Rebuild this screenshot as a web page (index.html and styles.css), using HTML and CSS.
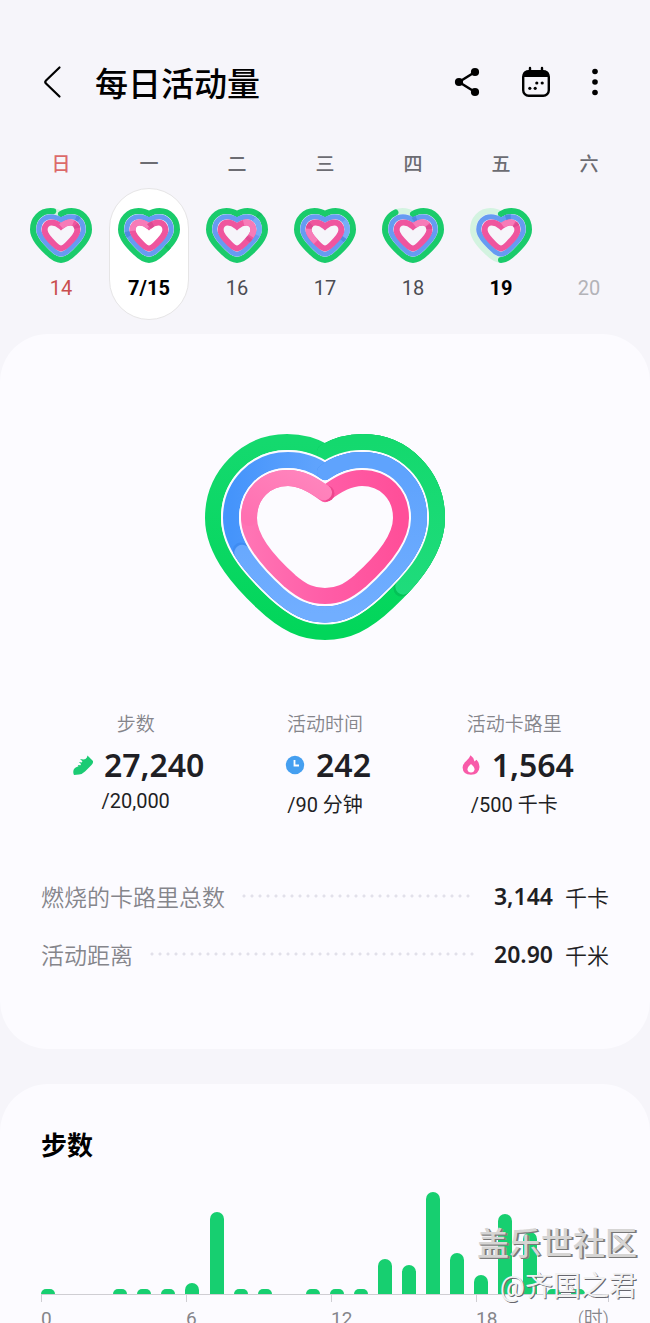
FILE: index.html
```html
<!DOCTYPE html>
<html lang="zh-CN">
    <head>
        <title>每日活动量</title>
        <meta charset="utf-8" />
        <meta name="viewport" content="width=device-width, initial-scale=1" />
        <link rel="stylesheet" href="styles.css">
    </head>

    <body>
        <!-- Shared ring shapes for the week strip and the big heart -->
        <svg class="defs" width="0" height="0" aria-hidden="true">
            <defs>
                <path id="ringSteps" pathLength="100" d="M31 6C34 4 37.5 3 41.5 3C51.5 3 59 11 59 21.5C59 30 51 38 45 44C40 49 36 52 31 52C26 52 22 49 17 44C11 38 3 30 3 21.5C3 11 10.5 3 20.5 3C24.5 3 28 4 31 6Z" />
                <path id="ringTime" pathLength="100" d="M31 12C34 10 37 8.7 41 8.7C48 8.7 53.3 14 53.3 21.5C53.3 28 46 35 41 40C37 44.3 34 46.2 31 46.2C28 46.2 25 44.3 21 40C16 35 8.7 28 8.7 21.5C8.7 14 14 8.7 21 8.7C25 8.7 28 10 31 12Z" />
                <path id="ringCal" pathLength="100" d="M31 18.6C34 16 37 14.5 40.3 14.5C44.5 14.5 47.4 17.5 47.4 22C47.4 27 42 32 37.5 36.5C34.5 39.5 33 40.4 31 40.4C29 40.4 27.5 39.5 24.5 36.5C20 32 14.6 27 14.6 22C14.6 17.5 17.5 14.5 21.7 14.5C25 14.5 28 16 31 18.6Z" />
                <path id="bigSteps" pathLength="100" d="M120 18C131 11.5 144 8 158 8C199 8 232 42 232 84C232 120 200 152 183 168C160 190 142 198 120 198C98 198 80 190 57 168C40 152 8 120 8 84C8 42 41 8 82 8C96 8 109 11.5 120 18Z" />
                <path id="bigTime" pathLength="100" d="M120 38C131 30 144 26 157 26C189 26 214 51 214 84C214 113 189 138 169 157C150 174 137 180.5 120 180.5C103 180.5 90 174 71 157C51 138 26 113 26 84C26 51 51 26 83 26C96 26 109 30 120 38Z" />
                <path id="bigCal" pathLength="100" d="M120 60C133 50 144 44 157 44C179 44 196 60 196 84C196 106 174 130 155 147C142 158 133 162 120 162C107 162 98 158 85 147C66 130 44 106 44 84C44 60 61 44 83 44C96 44 107 50 120 60Z" />
            </defs>
        </svg>

        <header class="topBar">
            <button class="iconBtn backBtn" aria-label="返回">
                <svg width="20" height="34" viewBox="0 0 20 34"><path d="M17.5 2.5L4 15.5Q2.5 17 4 18.5L17.5 31.5" fill="none" stroke="#000" stroke-width="2.2" stroke-linecap="round" /></svg>
            </button>
            <h1 class="title">每日活动量</h1>
            <div class="actions">
                <button class="iconBtn" aria-label="分享">
                    <svg width="28" height="32" viewBox="0 0 28 32">
                        <path d="M22 6L6 16L22 26" fill="none" stroke="#000" stroke-width="2.5" />
                        <circle cx="22" cy="6" r="4.1" /><circle cx="6" cy="16" r="4.1" /><circle cx="22" cy="26" r="4.1" />
                    </svg>
                </button>
                <button class="iconBtn" aria-label="日历">
                    <svg width="30" height="32" viewBox="0 0 30 32">
                        <rect x="2.2" y="5.2" width="25.6" height="24.6" rx="5.5" fill="none" stroke="#000" stroke-width="2.4" />
                        <path d="M2 11V9Q2 4.5 7 4.5H23Q28 4.5 28 9V11Z" />
                        <path d="M9 2V6M21 2V6" stroke="#000" stroke-width="2.4" stroke-linecap="round" />
                        <circle cx="15.8" cy="17" r="1.6" /><circle cx="21.2" cy="17" r="1.6" />
                        <circle cx="8.8" cy="22.3" r="1.6" /><circle cx="14.2" cy="22.3" r="1.6" />
                    </svg>
                </button>
                <button class="iconBtn" aria-label="更多">
                    <svg width="8" height="32" viewBox="0 0 8 32"><circle cx="4" cy="5.5" r="2.8" /><circle cx="4" cy="16" r="2.8" /><circle cx="4" cy="26.5" r="2.8" /></svg>
                </button>
            </div>
        </header>

        <nav class="week" aria-label="一周">
            <button class="day sunday">
                <span class="weekday">日</span>
                <span class="dayBody">
                    <svg class="miniHeart" viewBox="0 0 62 56">
                        <use href="#ringSteps" class="steps track" />
                        <use href="#ringSteps" class="steps" stroke-dasharray="95 100" />
                        <use href="#ringTime" class="time" /><use href="#ringTime" class="time mark" stroke-dasharray="0 12 3 100" />
                        <use href="#ringCal" class="cal" /><use href="#ringCal" class="cal light" stroke-dasharray="14 100" /><use href="#ringCal" class="cal mark" stroke-dasharray="0 17 4 100" />
                    </svg>
                    <span class="date">14</span>
                </span>
            </button>
            <button class="day selected" aria-current="date">
                <span class="weekday">一</span>
                <span class="dayBody">
                    <svg class="miniHeart" viewBox="0 0 62 56">
                        <use href="#ringSteps" class="steps" /><use href="#ringSteps" class="steps mark" stroke-dasharray="0 35 2 100" />
                        <use href="#ringTime" class="time" /><use href="#ringTime" class="time mark" stroke-dasharray="0 71 4 100" />
                        <use href="#ringCal" class="cal" /><use href="#ringCal" class="cal light" stroke-dasharray="0 76 24 100" /><use href="#ringCal" class="cal mark" stroke-dasharray="5 100" />
                    </svg>
                    <span class="date">7/15</span>
                </span>
            </button>
            <button class="day">
                <span class="weekday">二</span>
                <span class="dayBody">
                    <svg class="miniHeart" viewBox="0 0 62 56">
                        <use href="#ringSteps" class="steps" /><use href="#ringSteps" class="steps mark" stroke-dasharray="0 13 2 100" />
                        <use href="#ringTime" class="time" /><use href="#ringTime" class="time light" stroke-dasharray="0 14 14 100" />
                        <use href="#ringCal" class="cal" /><use href="#ringCal" class="cal light" stroke-dasharray="0 8 22 100" /><use href="#ringCal" class="cal mark" stroke-dasharray="0 32 4 100" />
                    </svg>
                    <span class="date">16</span>
                </span>
            </button>
            <button class="day">
                <span class="weekday">三</span>
                <span class="dayBody">
                    <svg class="miniHeart" viewBox="0 0 62 56">
                        <use href="#ringSteps" class="steps" />
                        <use href="#ringTime" class="time" /><use href="#ringTime" class="time light" stroke-dasharray="0 16 14 100" /><use href="#ringTime" class="time mark" stroke-dasharray="0 30 3 100" />
                        <use href="#ringCal" class="cal" /><use href="#ringCal" class="cal light" stroke-dasharray="0 62 16 100" /><use href="#ringCal" class="cal mark" stroke-dasharray="0 79 5 100" />
                    </svg>
                    <span class="date">17</span>
                </span>
            </button>
            <button class="day">
                <span class="weekday">四</span>
                <span class="dayBody">
                    <svg class="miniHeart" viewBox="0 0 62 56">
                        <use href="#ringSteps" class="steps track" />
                        <use href="#ringSteps" class="steps" stroke-dasharray="89 100" />
                        <use href="#ringTime" class="time" /><use href="#ringTime" class="time mark" stroke-dasharray="3 100" />
                        <use href="#ringCal" class="cal" /><use href="#ringCal" class="cal light" stroke-dasharray="0 2 15 100" /><use href="#ringCal" class="cal mark" stroke-dasharray="0 18 4 100" />
                    </svg>
                    <span class="date">18</span>
                </span>
            </button>
            <button class="day today">
                <span class="weekday">五</span>
                <span class="dayBody">
                    <svg class="miniHeart" viewBox="0 0 62 56">
                        <use href="#ringSteps" class="steps track" />
                        <use href="#ringSteps" class="steps" stroke-dasharray="50 100" />
                        <use href="#ringTime" class="time" /><use href="#ringTime" class="time mark" stroke-dasharray="0 4 4 100" />
                        <use href="#ringCal" class="cal" /><use href="#ringCal" class="cal light" stroke-dasharray="0 2 13 100" /><use href="#ringCal" class="cal mark" stroke-dasharray="0 16 3 100" />
                    </svg>
                    <span class="date">19</span>
                </span>
            </button>
            <button class="day" disabled>
                <span class="weekday">六</span>
                <span class="dayBody">
                    <svg class="miniHeart" viewBox="0 0 62 56"></svg>
                    <span class="date">20</span>
                </span>
            </button>
        </nav>

        <main>
            <section class="card summary">
                <svg class="heart" viewBox="0 0 240 206" role="img" aria-label="活动进度">
                    <defs>
                        <linearGradient id="gSteps" x1="0" y1="0" x2="0" y2="1"><stop offset="0" stop-color="#14d96e" /><stop offset="1" stop-color="#02d65a" /></linearGradient>
                        <linearGradient id="gStepsTop" x1="0" y1="0" x2="0" y2="1"><stop offset="0" stop-color="#14d96e" /><stop offset="1" stop-color="#22dc7f" /></linearGradient>
                        <linearGradient id="gTime" x1="0" y1="0" x2="1" y2="0"><stop offset="0" stop-color="#4594fb" /><stop offset=".45" stop-color="#5fa3fd" /></linearGradient>
                        <linearGradient id="gTimeTop" x1="0" y1="0" x2="0" y2="1"><stop offset=".1" stop-color="#5fa3fd" /><stop offset="1" stop-color="#71aeff" /></linearGradient>
                        <linearGradient id="gCal" x1="0" y1="0" x2="1" y2="0"><stop offset="0" stop-color="#ff74b4" /><stop offset=".5" stop-color="#ff5da7" /><stop offset="1" stop-color="#ff4f99" /></linearGradient>
                        <linearGradient id="gCalTop" x1="0" y1="1" x2="1" y2="0"><stop offset="0" stop-color="#ff70b1" /><stop offset="1" stop-color="#ff85bd" /></linearGradient>
                    </defs>
                    <g fill="none" stroke-width="16" stroke-linecap="round" stroke-linejoin="round">
                        <use href="#bigSteps" stroke="url(#gSteps)" />
                        <use href="#bigSteps" stroke="#04c257" stroke-dasharray="36.2 100" />
                        <use href="#bigSteps" stroke="url(#gStepsTop)" stroke-dasharray="35.8 100" />

                        <use href="#bigTime" stroke="#fcfbff" stroke-width="20" />
                        <use href="#bigTime" stroke="url(#gTime)" />
                        <use href="#bigTime" stroke="#3f8cf2" stroke-dasharray="70 100" />
                        <use href="#bigTime" stroke="url(#gTimeTop)" stroke-dasharray="69.5 100" />

                        <use href="#bigCal" stroke="#fcfbff" stroke-width="20" />
                        <use href="#bigCal" stroke="url(#gCal)" />
                        <circle cx="121.5" cy="59.5" r="8" fill="#ee458e" stroke="none" />
                        <path d="M44 84C44 60 61 44 83 44C96 44 107 50 119 58.5" stroke="url(#gCalTop)" />
                    </g>
                </svg>

                <div class="stats">
                    <div class="stat">
                        <div class="statLabel">步数</div>
                        <div class="statValue">
                            <svg width="20" height="20" viewBox="0 0 20 20"><path fill="#1bcb74" d="M14.5 0.5L20 6Q20.3 8 18.5 10L12 16.5Q9.5 19 6 19.5L1 20Q-.5 17 1 14Q2 12.5 5.500 11.300L4.800 10L7.500 10.200L8 9L5.800 7L8.800 7.400L9.400 6.200L7 4L10.500 4.600L12.500 4Q14.300 2.500 14.5 .5Z" /></svg>
                            <strong>27,240</strong>
                        </div>
                        <div class="statGoal">/20,000</div>
                    </div>
                    <div class="stat">
                        <div class="statLabel">活动时间</div>
                        <div class="statValue">
                            <svg width="20" height="20" viewBox="0 0 20 20"><circle cx="10" cy="10" r="9.2" fill="#459ff0" /><path d="M9.5 5V10.5H14" fill="none" stroke="#fff" stroke-width="1.8" /></svg>
                            <strong>242</strong>
                        </div>
                        <div class="statGoal">/90 分钟</div>
                    </div>
                    <div class="stat">
                        <div class="statLabel">活动卡路里</div>
                        <div class="statValue">
                            <svg width="20" height="20" viewBox="0 0 20 20"><path fill="#f85ba9" d="M9.5 .3Q12.8 2.5 13.5 6.5L15.5 4.8Q18.5 8 18.5 12Q18 19.6 10 19.8Q1.8 19.6 1.6 12.5Q1.8 9 5 6.2Q8.5 3.3 9.5 .3Z" /><path fill="#fff" d="M10 9Q13.5 12 13.5 14.3Q13.2 17.5 10 17.6Q6.8 17.5 6.5 14.3Q6.5 12 10 9Z" /></svg>
                            <strong>1,564</strong>
                        </div>
                        <div class="statGoal">/500 千卡</div>
                    </div>
                </div>

                <div class="details">
                    <div class="detail">
                        <span class="detailLabel">燃烧的卡路里总数</span>
                        <span class="dots"></span>
                        <strong>3,144</strong>
                        <span class="unit">千卡</span>
                    </div>
                    <div class="detail">
                        <span class="detailLabel">活动距离</span>
                        <span class="dots"></span>
                        <strong>20.90</strong>
                        <span class="unit">千米</span>
                    </div>
                </div>
            </section>

            <section class="card chartCard">
                <h2 class="cardTitle">步数</h2>
                <div class="bars">
                    <span class="bar" style="height: 5px"></span>
                    <span class="bar" style="height: 0"></span>
                    <span class="bar" style="height: 0"></span>
                    <span class="bar" style="height: 5px"></span>
                    <span class="bar" style="height: 5px"></span>
                    <span class="bar" style="height: 5px"></span>
                    <span class="bar" style="height: 11px"></span>
                    <span class="bar" style="height: 82px"></span>
                    <span class="bar" style="height: 5px"></span>
                    <span class="bar" style="height: 5px"></span>
                    <span class="bar" style="height: 0"></span>
                    <span class="bar" style="height: 5px"></span>
                    <span class="bar" style="height: 5px"></span>
                    <span class="bar" style="height: 5px"></span>
                    <span class="bar" style="height: 35px"></span>
                    <span class="bar" style="height: 29px"></span>
                    <span class="bar" style="height: 102px"></span>
                    <span class="bar" style="height: 41px"></span>
                    <span class="bar" style="height: 19px"></span>
                    <span class="bar" style="height: 80px"></span>
                    <span class="bar" style="height: 62px"></span>
                    <span class="bar" style="height: 5px"></span>
                    <span class="bar" style="height: 5px"></span>
                    <span class="bar" style="height: 0"></span>
                </div>
                <div class="axis">
                    <span>0</span>
                    <span>6</span>
                    <span>12</span>
                    <span class="lastTick">18<em>(时)</em></span>
                </div>
            </section>
        </main>

        <div class="watermark">
            <div class="siteName">盖乐世社区</div>
            <div class="userName">@齐国之君</div>
        </div>
    </body>
</html>
```
FILE: styles.css
```css
* {
    box-sizing: border-box;
}

body {
    margin: 0;
    height: 100vh;
    overflow: hidden;
    position: relative;
    background-color: #f6f5fa;
    color: #1f1f25;
    font-family: Roboto, "Noto Sans CJK SC", sans-serif;
}

button {
    border: 0;
    padding: 0;
    background: none;
    color: inherit;
    font: inherit;
    cursor: pointer;
}

svg {
    display: block;
}

.defs {
    position: absolute;
}

/* Header */
.topBar {
    display: flex;
    align-items: center;
    padding: 56px 51px 0 42px;
    height: 108px;
}

.backBtn {
    margin-right: 33px;
}

.title {
    margin: 0;
    padding-top: 6px;
    font-size: 33px;
    line-height: 44px;
    font-weight: 500;
    color: #000;
}

.actions {
    display: flex;
    align-items: center;
    gap: 40px;
    margin-left: auto;
}

/* Week strip */
.week {
    display: grid;
    grid-template-columns: repeat(7, 1fr);
    padding: 45px 17px 0;
}

.day {
    display: flex;
    flex-direction: column;
    align-items: center;
    font-size: 20px;
    color: #4c4c52;
}

.weekday {
    font-size: 19px;
    font-weight: 500;
    line-height: 24px;
    color: #6c6c72;
}

.dayBody {
    display: flex;
    flex-direction: column;
    align-items: center;
    width: 80px;
    height: 132px;
    margin-top: 11px;
    padding-top: 19px;
    border: 1px solid transparent;
    border-radius: 40px;
}

.miniHeart {
    width: 62px;
    height: 56px;
    fill: none;
}

.date {
    margin-top: 12px;
    line-height: 24px;
}

.selected .dayBody {
    background-color: #fff;
    border-color: #e6e5e6;
}

.selected .date,
.today .date {
    font-weight: 700;
    color: #000;
}

.sunday .date {
    color: #c94e4e;
}

.sunday .weekday {
    color: #dc6a6a;
}

.day:disabled .date {
    color: #b3b3b8;
}

.steps { stroke: #1acb6b; stroke-width: 6; stroke-linecap: round; }
.steps.mark { stroke: #16be65; stroke-linecap: butt; }
.steps.track { stroke: #d3f3e0; }
.time { stroke: #669bf2; stroke-width: 5; }
.time.mark { stroke: #5089e2; }
.time.light { stroke: #78acf8; }
.cal { stroke: #ef559e; stroke-width: 6; }
.cal.mark { stroke: #de4a92; }
.cal.light { stroke: #f77bb8; }

/* Cards */
.card {
    background-color: #fcfbff;
    border-radius: 48px;
    padding: 0 41px;
}

.summary {
    margin-top: 14px;
    padding-top: 100px;
    padding-bottom: 66px;
}

.heart {
    width: 240px;
    margin: 0 auto;
}

.stats {
    display: grid;
    grid-template-columns: repeat(3, 1fr);
    margin-top: 69px;
}

.stat {
    text-align: center;
}

.statLabel {
    font-size: 19px;
    line-height: 32px;
    font-weight: 350;
    color: #85858b;
}

.statValue {
    display: flex;
    justify-content: center;
    align-items: center;
    gap: 11px;
    height: 48px;
    padding-left: 6px;
}

.statValue strong {
    font-family: "Noto Sans", sans-serif;
    font-size: 32px;
    line-height: 40px;
    font-weight: 600;
}

.statGoal {
    font-size: 20px;
    font-weight: 400;
}

.details {
    margin-top: 49px;
}

.detail {
    display: flex;
    align-items: center;
    height: 58px;
    font-size: 23px;
}

.detailLabel {
    font-weight: 350;
    color: #85858b;
}

.dots {
    flex: 1;
    height: 4px;
    margin: 0 20px 0 15px;
    background: radial-gradient(circle, #e2e0ea 1px, transparent 2px) repeat-x;
    background-size: 8px 4px;
}

.detail strong {
    font-family: "Noto Sans", sans-serif;
    font-size: 23px;
    font-weight: 600;
}

.unit {
    margin-left: 12px;
    font-size: 22px;
    font-weight: 350;
}

/* Hourly chart */
.chartCard {
    margin-top: 35px;
    padding-top: 42px;
    height: 400px;
}

.cardTitle {
    margin: 0;
    font-size: 26px;
    line-height: 40px;
    font-weight: 700;
    color: #000;
}

.bars {
    display: flex;
    justify-content: space-between;
    align-items: flex-end;
    height: 129px;
    border-bottom: 1px solid #cfced3;
}

.bar {
    width: 14px;
    background-color: #17cf70;
    border-radius: 7px 7px 0 0;
}

.axis {
    display: grid;
    grid-template-columns: 145fr 145fr 145fr 133fr;
    font-size: 19px;
    line-height: 22px;
    color: #85858a;
}

.axis span {
    padding-top: 13px;
    background: linear-gradient(#cfced3, #cfced3) no-repeat;
    background-size: 1px 7px;
}

.axis .lastTick {
    display: flex;
    justify-content: space-between;
    background: linear-gradient(#cfced3, #cfced3) left top / 1px 7px no-repeat, linear-gradient(#cfced3, #cfced3) right top / 1px 7px no-repeat;
}

.axis em {
    font-style: normal;
    font-weight: 350;
}

/* Watermark over the page corner */
.watermark {
    position: absolute;
    right: 13px;
    bottom: 15px;
    text-align: right;
}

.siteName {
    font-size: 32px;
    line-height: 44px;
    font-weight: 500;
    color: #d6d5d4;
    text-shadow: 1px 1px 0 #777, 2px 1px 0 #8a8a8a;
}

.userName {
    font-size: 28px;
    line-height: 42px;
    font-weight: 400;
    color: #f2f2f2;
    text-shadow: 1px 1px 0 #66666e;
}
```
